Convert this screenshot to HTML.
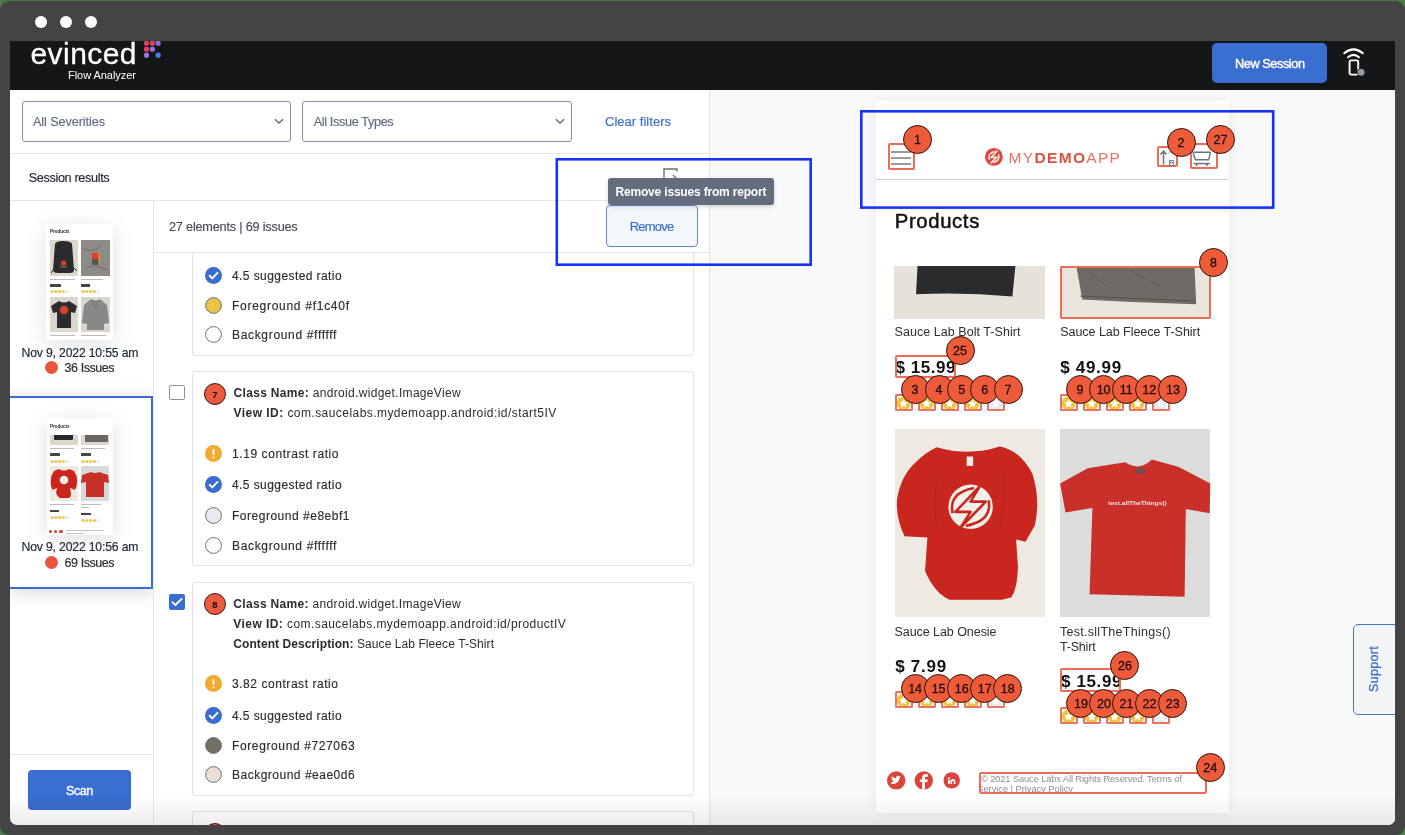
<!DOCTYPE html>
<html><head><meta charset="utf-8">
<style>
*{box-sizing:border-box;margin:0;padding:0}
html,body{width:1405px;height:835px;overflow:hidden;background:#4a7a48;font-family:"Liberation Sans",sans-serif}
.a{position:absolute}
#frame{position:absolute;left:0;top:1px;width:1405px;height:834px;background:#444444;border-radius:9px}
.tl{position:absolute;width:12.2px;height:12.2px;border-radius:50%;background:#fff;top:14.8px}
#content{position:absolute;left:10px;top:41px;width:1385px;height:784px;background:#fff;border-radius:0 0 7px 7px;overflow:hidden}
#pg{position:absolute;left:-10px;top:-41px;width:1405px;height:835px;will-change:transform}
.hl{position:absolute;height:1px;background:#e2e5e9}
.vl{position:absolute;width:1px;background:#e2e5e9}
.t{position:absolute;white-space:nowrap;line-height:1}
.sel{position:absolute;border:1.3px solid #8790a3;border-radius:3px;background:#fff}
.thumb{position:absolute;background:#fff;box-shadow:0 4px 20px rgba(0,0,0,0.13);overflow:hidden}
.card{position:absolute;background:#fff;border:1px solid #dfe2e6;border-radius:3px}
.ic{position:absolute;width:17px;height:17px;border-radius:50%}
.bd{position:absolute;border-radius:50%;background:#ec5b3f;border:1px solid #2a1510;color:#1e0a05;text-align:center;font-size:10px;font-weight:bold}
.nb{position:absolute;width:29px;height:29px;border-radius:50%;background:#ee5b3b;border:1px solid #2b120b;color:#220c06;text-align:center;font-size:12.5px;line-height:29px;-webkit-text-stroke:0.3px #220c06}
.box{position:absolute;border:2px solid #eb6d58;border-radius:2px}
.star{position:absolute;width:18px;height:17px;border:2px solid #ec7360;border-radius:1.5px;overflow:hidden;background:#fff}
</style></head><body>
<div id="frame">
  <div class="tl" style="left:35px"></div>
  <div class="tl" style="left:60px"></div>
  <div class="tl" style="left:85px"></div>
</div>
<div id="content"><div id="pg">
<div class="a" style="left:0px;top:41px;width:1405px;height:49px;background:#151617"></div>
<div class="t" style="left:30.5px;top:39px;font-size:30px;color:#fff;font-weight:400;letter-spacing:0.432px;-webkit-text-stroke:0.3px #fff;">evinced</div>
<svg class="a" style="left:141px;top:41px" width="22" height="18" viewBox="0 0 22 18">
    <circle cx="5.5" cy="2.2" r="2.6" fill="#e0405a"/><circle cx="11.4" cy="2.2" r="2.6" fill="#d84a6a"/><circle cx="17.1" cy="2.2" r="2.6" fill="#9a6ad8"/>
    <circle cx="5.5" cy="8.2" r="2.6" fill="#e0405a"/><circle cx="11.4" cy="8.2" r="2.6" fill="#9a70d8"/>
    <circle cx="5.5" cy="14.2" r="2.6" fill="#9a78e0"/><circle cx="17.1" cy="14.2" r="2.6" fill="#4a7ee8"/>
  </svg>
<div class="t" style="left:68px;top:70px;font-size:11px;color:#fff;font-weight:400;letter-spacing:-0.040px;">Flow Analyzer</div>
<div class="a" style="left:1212px;top:43px;width:115px;height:40px;background:#3a6dd0;border-radius:5px"></div>
<div class="t" style="left:1235px;top:58px;font-size:12.7px;color:#fff;font-weight:400;letter-spacing:-0.405px;-webkit-text-stroke:0.4px #fff;">New Session</div>
<svg class="a" style="left:1340px;top:46px" width="30" height="32" viewBox="0 0 30 32">
    <path d="M4.2 7.2 Q13.5 -0.5 22.8 7.2" stroke="#fff" stroke-width="2" fill="none" stroke-linecap="round"/>
    <path d="M8 11.2 Q13.5 6.6 19 11.2" stroke="#fff" stroke-width="2" fill="none" stroke-linecap="round"/>
    <rect x="9.6" y="14.4" width="8.6" height="14.2" rx="1.5" stroke="#fff" stroke-width="1.9" fill="none"/>
    <circle cx="21.1" cy="26.2" r="4.3" fill="#151617"/>
    <circle cx="21.1" cy="26.2" r="3.5" fill="#8a9aa8"/>
  </svg>
<div class="a" style="left:709px;top:90px;width:696px;height:745px;background:#f8f9fb"></div>
<div class="vl" style="left:709px;top:90px;height:745px"></div>
<div class="sel" style="left:22px;top:101px;width:269px;height:41px"></div>
<div class="t" style="left:33px;top:116px;font-size:12.7px;color:#5f6a80;font-weight:400;letter-spacing:-0.103px;-webkit-text-stroke:0.15px #5f6a80;">All Severities</div>
<svg class="a" style="left:274px;top:118px" width="10" height="7" viewBox="0 0 10 7"><path d="M1 1.2 L5 5 L9 1.2" stroke="#5f6a80" stroke-width="1.4" fill="none"/></svg>
<div class="sel" style="left:302px;top:101px;width:270px;height:41px"></div>
<div class="t" style="left:313.7px;top:116px;font-size:12.7px;color:#5f6a80;font-weight:400;letter-spacing:-0.365px;-webkit-text-stroke:0.15px #5f6a80;">All Issue Types</div>
<svg class="a" style="left:555px;top:118px" width="10" height="7" viewBox="0 0 10 7"><path d="M1 1.2 L5 5 L9 1.2" stroke="#5f6a80" stroke-width="1.4" fill="none"/></svg>
<div class="t" style="left:605px;top:115px;font-size:13px;color:#3a6dd0;font-weight:400;letter-spacing:0.021px;-webkit-text-stroke:0.15px #3a6dd0;">Clear filters</div>
<div class="hl" style="left:0;top:153px;width:709px"></div>
<div class="t" style="left:28.7px;top:172px;font-size:12.7px;color:#1e2330;font-weight:400;letter-spacing:-0.359px;-webkit-text-stroke:0.15px #1e2330;">Session results</div>
<div class="hl" style="left:0;top:200px;width:709px"></div>
<div class="vl" style="left:153px;top:200px;height:635px"></div>
<div class="t" style="left:169px;top:221px;font-size:12.7px;color:#454b57;font-weight:400;letter-spacing:-0.199px;-webkit-text-stroke:0.15px #454b57;">27 elements | 69 issues</div>
<div class="hl" style="left:153px;top:252px;width:556px"></div>
<div class="a" style="left:10px;top:201px;width:143px;height:553px;overflow:hidden"><div class="a" style="left:-10px;top:-201px;width:1405px;height:835px">
<div class="thumb" style="left:46px;top:224px;width:67px;height:116px">
    <div class="t" style="left:4px;top:6px;font-size:4.5px;color:#222;font-weight:bold">Products</div>
    <div class="a" style="left:4px;top:16px;width:28px;height:36px;background:#ddd6cb"></div>
    <svg class="a" style="left:4px;top:16px" width="28" height="36" viewBox="0 0 28 36"><path d="M5 4 Q6 1 13 1 Q21 1 22 4 L24 30 Q24 33 20 33 L8 33 Q3 33 3 30 Z" fill="#2b2b2d"/><path d="M3 30 L1 33 M24 28 L27 31" stroke="#333" stroke-width="1"/><circle cx="13.5" cy="23" r="2.6" fill="#d8412a"/><rect x="10" y="26" width="7" height="2" fill="#555"/></svg>
    <div class="a" style="left:35px;top:16px;width:29px;height:36px;background:#8e8a86"></div>
    <svg class="a" style="left:35px;top:16px" width="29" height="36" viewBox="0 0 29 36"><path d="M2 8 Q10 14 20 6 M4 28 Q14 24 26 30" stroke="#7a7672" stroke-width="1.2" fill="none"/><rect x="11" y="13" width="7" height="6" fill="#e0402a"/><rect x="11" y="19" width="7" height="6" fill="#555"/><rect x="17.5" y="12" width="1.2" height="13" fill="#d9a040"/></svg>
    <div class="a" style="left:4px;top:55px;width:25px;height:1px;background:#bbb"></div>
    <div class="a" style="left:35px;top:55px;width:22px;height:1px;background:#bbb"></div>
    <div class="a" style="left:4px;top:60px;width:11px;height:2.5px;background:#444"></div>
    <div class="a" style="left:35px;top:60px;width:9px;height:2.5px;background:#444"></div>
    <svg class="a" style="left:4px;top:65px" width="60" height="5" viewBox="0 0 60 5"><g fill="#f0c450"><circle cx="2" cy="2.5" r="1.6"/><circle cx="5.8" cy="2.5" r="1.6"/><circle cx="9.6" cy="2.5" r="1.6"/><circle cx="13.4" cy="2.5" r="1.6"/><circle cx="33" cy="2.5" r="1.6"/><circle cx="36.8" cy="2.5" r="1.6"/><circle cx="40.6" cy="2.5" r="1.6"/><circle cx="44.4" cy="2.5" r="1.6"/></g><g fill="#e4e8ef"><circle cx="17.2" cy="2.5" r="1.6"/><circle cx="48.2" cy="2.5" r="1.6"/></g></svg>
    <div class="a" style="left:4px;top:73px;width:28px;height:35px;background:#dcd6cc"></div>
    <svg class="a" style="left:4px;top:73px" width="28" height="35" viewBox="0 0 28 35"><path d="M9 4 Q14 7 19 4 L27 9 L25 16 L21 15 L21 31 L7 31 L7 15 L3 16 L1 9 Z" fill="#2c2c2e"/><circle cx="14" cy="13" r="4.2" fill="#d8412a"/></svg>
    <div class="a" style="left:35px;top:73px;width:29px;height:35px;background:#d9d4ce"></div>
    <svg class="a" style="left:35px;top:73px" width="29" height="35" viewBox="0 0 29 35"><path d="M10 2 Q14.5 5 19 2 L26 8 L28 26 L23 27 L23 33 L6 33 L6 27 L1 26 L3 8 Z" fill="#8a8886"/><path d="M12 3 L14.5 12 L17 3" stroke="#777" stroke-width="1" fill="none"/></svg>
    <div class="a" style="left:4px;top:111px;width:25px;height:1px;background:#bbb"></div>
    <div class="a" style="left:35px;top:111px;width:25px;height:1px;background:#bbb"></div>
  </div>
<div class="t" style="left:21.5px;top:347px;font-size:12.2px;color:#232a3d;font-weight:400;letter-spacing:-0.155px;-webkit-text-stroke:0.18px #232a3d;">Nov 9, 2022 10:55 am</div>
<div class="a" style="left:45px;top:361px;width:13px;height:13px;border-radius:50%;background:#e9573a"></div>
<div class="t" style="left:64.6px;top:362px;font-size:12.5px;color:#2a2d33;font-weight:400;letter-spacing:-0.439px;-webkit-text-stroke:0.18px #2a2d33;">36 Issues</div>
<div class="a" style="left:10px;top:396px;width:143px;height:193px;border:2px solid #3a6dd0;border-left:none;box-shadow:0 3px 18px rgba(0,0,0,0.16);background:#fff"></div>
<div class="thumb" style="left:47px;top:418px;width:66px;height:117px">
    <div class="t" style="left:3px;top:6.5px;font-size:4.5px;color:#222;font-weight:bold">Products</div>
    <div class="a" style="left:3px;top:17px;width:28px;height:10px;background:#ddd6cc"></div>
    <div class="a" style="left:7px;top:17px;width:19px;height:5px;background:#25272a;border-radius:0 0 1px 1px"></div>
    <div class="a" style="left:34px;top:17px;width:28px;height:10px;background:#ddd6cc"></div>
    <div class="a" style="left:37.5px;top:17px;width:23px;height:6.5px;background:#6a6763"></div>
    <div class="a" style="left:3px;top:29.5px;width:24px;height:1px;background:#bbb"></div>
    <div class="a" style="left:34px;top:29.5px;width:24px;height:1px;background:#bbb"></div>
    <div class="a" style="left:3px;top:35px;width:10px;height:2.5px;background:#444"></div>
    <div class="a" style="left:34px;top:35px;width:10px;height:2.5px;background:#444"></div>
    <svg class="a" style="left:3px;top:41px" width="60" height="5" viewBox="0 0 60 5"><g fill="#f0c450"><circle cx="2" cy="2.5" r="1.6"/><circle cx="5.8" cy="2.5" r="1.6"/><circle cx="9.6" cy="2.5" r="1.6"/><circle cx="13.4" cy="2.5" r="1.6"/><circle cx="33" cy="2.5" r="1.6"/><circle cx="36.8" cy="2.5" r="1.6"/><circle cx="40.6" cy="2.5" r="1.6"/><circle cx="44.4" cy="2.5" r="1.6"/></g><g fill="#e4e8ef"><circle cx="17.2" cy="2.5" r="1.6"/><circle cx="48.2" cy="2.5" r="1.6"/></g></svg>
    <div class="a" style="left:3px;top:48px;width:28px;height:35px;background:#eee9e1"></div>
    <svg class="a" style="left:3px;top:48px" width="28" height="35" viewBox="0 0 28 35"><path d="M9 3 Q14 6 19 3 L24 5 Q27 9 27.3 15 Q27 20 25 24 L20 22 L21 28 Q21 31 19 32 L10 32 Q7 30 6 27 L7 22 L2.5 24 Q0.5 20 0.7 15 Q1 9 4 5 Z" fill="#c9261e"/><circle cx="14" cy="14" r="4.3" fill="#f5eeea"/></svg>
    <div class="a" style="left:34px;top:48px;width:28px;height:35px;background:#d9d9d9"></div>
    <svg class="a" style="left:34px;top:48px" width="28" height="35" viewBox="0 0 28 35"><path d="M10 6 Q14 8 18 6 L27 9 L28 17 L23 16 L23 31 L5 31 L5 16 L0 17 L1 9 Z" fill="#c8302a"/></svg>
    <div class="a" style="left:3px;top:86px;width:24px;height:1px;background:#bbb"></div>
    <div class="a" style="left:34px;top:86px;width:20px;height:1px;background:#bbb"></div>
    <div class="a" style="left:34px;top:89px;width:8px;height:1px;background:#bbb"></div>
    <div class="a" style="left:3px;top:91.5px;width:9px;height:2.5px;background:#444"></div>
    <div class="a" style="left:34px;top:94.5px;width:10px;height:2.5px;background:#444"></div>
    <svg class="a" style="left:3px;top:96.5px" width="30" height="5" viewBox="0 0 30 5"><g fill="#f0c450"><circle cx="2" cy="2.5" r="1.6"/><circle cx="5.8" cy="2.5" r="1.6"/><circle cx="9.6" cy="2.5" r="1.6"/><circle cx="13.4" cy="2.5" r="1.6"/></g><circle cx="17.2" cy="2.5" r="1.6" fill="#e4e8ef"/></svg>
    <svg class="a" style="left:34px;top:99.5px" width="30" height="5" viewBox="0 0 30 5"><g fill="#f0c450"><circle cx="2" cy="2.5" r="1.6"/><circle cx="5.8" cy="2.5" r="1.6"/><circle cx="9.6" cy="2.5" r="1.6"/><circle cx="13.4" cy="2.5" r="1.6"/></g><circle cx="17.2" cy="2.5" r="1.6" fill="#e4e8ef"/></svg>
    <div class="a" style="left:1.8px;top:111.8px;width:3.4px;height:3.4px;background:#d8412a;border-radius:50%"></div>
    <div class="a" style="left:7px;top:111.8px;width:3.4px;height:3.4px;background:#d8412a;border-radius:50%"></div>
    <div class="a" style="left:12.3px;top:111.8px;width:3.4px;height:3.4px;background:#d8412a;border-radius:50%"></div>
    <div class="a" style="left:19px;top:112.3px;width:38px;height:0.8px;background:#c4c4c4"></div>
    <div class="a" style="left:19px;top:114.5px;width:18px;height:0.8px;background:#c4c4c4"></div>
  </div>
<div class="t" style="left:21.5px;top:541px;font-size:12.2px;color:#232a3d;font-weight:400;letter-spacing:-0.155px;-webkit-text-stroke:0.18px #232a3d;">Nov 9, 2022 10:56 am</div>
<div class="a" style="left:45px;top:556px;width:13px;height:13px;border-radius:50%;background:#e9573a"></div>
<div class="t" style="left:64.6px;top:557px;font-size:12.5px;color:#2a2d33;font-weight:400;letter-spacing:-0.439px;-webkit-text-stroke:0.18px #2a2d33;">69 Issues</div>
</div></div>
<div class="hl" style="left:10px;top:754px;width:143px"></div>
<div class="a" style="left:28px;top:770px;width:103px;height:40px;background:#3a6dd0;border-radius:4px"></div>
<div class="t" style="left:66.1px;top:785px;font-size:12.5px;color:#fff;font-weight:400;letter-spacing:-0.500px;-webkit-text-stroke:0.4px #fff;">Scan</div>
<div class="a" style="left:154px;top:253px;width:555px;height:582px;overflow:hidden"><div class="a" style="left:-154px;top:-253px;width:1405px;height:835px">
<div class="card" style="left:192px;top:150px;width:502px;height:206px"></div>
<svg class="a" style="left:205.4px;top:266.5px" width="17" height="17" viewBox="0 0 17 17"><circle cx="8.5" cy="8.5" r="8.5" fill="#3a6dd0"/><path d="M4.6 8.8 L7.3 11.4 L12.5 5.9" stroke="#fff" stroke-width="1.9" fill="none" stroke-linecap="round" stroke-linejoin="round"/></svg>
<div class="t" style="left:232px;top:270px;font-size:12px;color:#2a2c31;font-weight:400;letter-spacing:0.418px;-webkit-text-stroke:0.15px #2a2c31;">4.5 suggested ratio</div>
<svg class="a" style="left:205.4px;top:296.5px" width="17" height="17" viewBox="0 0 17 17"><circle cx="8.5" cy="8.5" r="7.9" fill="#ebc447" stroke="#6d6f73" stroke-width="1"/></svg>
<div class="t" style="left:232px;top:300px;font-size:12px;color:#2a2c31;font-weight:400;letter-spacing:0.721px;-webkit-text-stroke:0.15px #2a2c31;">Foreground #f1c40f</div>
<svg class="a" style="left:205.4px;top:326.0px" width="17" height="17" viewBox="0 0 17 17"><circle cx="8.5" cy="8.5" r="7.9" fill="#ffffff" stroke="#6d6f73" stroke-width="1"/></svg>
<div class="t" style="left:232px;top:329px;font-size:12px;color:#2a2c31;font-weight:400;letter-spacing:0.672px;-webkit-text-stroke:0.15px #2a2c31;">Background #ffffff</div>
<div class="a" style="left:169px;top:385px;width:16px;height:15px;border:1.3px solid #8a93a4;border-radius:2px;background:#fff"></div>
<div class="card" style="left:192px;top:371px;width:502px;height:195px"></div>
<div class="a" style="left:204px;top:383px;width:22px;height:22px;border-radius:50%;background:#ec5b3f;border:1px solid #3a1a12"></div>
<div class="t" style="left:204px;width:22px;text-align:center;top:390px;font-size:9.5px;color:#1e0a05;font-weight:700;">7</div>
<div class="t" style="left:233.6px;top:387px;font-size:12px;color:#2a2c31;font-weight:400;letter-spacing:0.317px;"><b>Class Name:</b> android.widget.ImageView</div>
<div class="t" style="left:233.6px;top:407px;font-size:12px;color:#2a2c31;font-weight:400;letter-spacing:0.444px;"><b>View ID:</b> com.saucelabs.mydemoapp.android:id/start5IV</div>
<svg class="a" style="left:205.4px;top:444.8px" width="17" height="17" viewBox="0 0 17 17"><circle cx="8.5" cy="8.5" r="8.5" fill="#f1a92f"/><rect x="7.6" y="3.8" width="1.8" height="6" rx="0.9" fill="#fff"/><circle cx="8.5" cy="12.4" r="1" fill="#fff"/></svg>
<div class="t" style="left:232px;top:448px;font-size:12px;color:#2a2c31;font-weight:400;letter-spacing:0.580px;-webkit-text-stroke:0.15px #2a2c31;">1.19 contrast ratio</div>
<svg class="a" style="left:205.4px;top:476.3px" width="17" height="17" viewBox="0 0 17 17"><circle cx="8.5" cy="8.5" r="8.5" fill="#3a6dd0"/><path d="M4.6 8.8 L7.3 11.4 L12.5 5.9" stroke="#fff" stroke-width="1.9" fill="none" stroke-linecap="round" stroke-linejoin="round"/></svg>
<div class="t" style="left:232px;top:479px;font-size:12px;color:#2a2c31;font-weight:400;letter-spacing:0.418px;-webkit-text-stroke:0.15px #2a2c31;">4.5 suggested ratio</div>
<svg class="a" style="left:205.4px;top:507.0px" width="17" height="17" viewBox="0 0 17 17"><circle cx="8.5" cy="8.5" r="7.9" fill="#e8ebf1" stroke="#6d6f73" stroke-width="1"/></svg>
<div class="t" style="left:232px;top:510px;font-size:12px;color:#2a2c31;font-weight:400;letter-spacing:0.515px;-webkit-text-stroke:0.15px #2a2c31;">Foreground #e8ebf1</div>
<svg class="a" style="left:205.4px;top:536.5px" width="17" height="17" viewBox="0 0 17 17"><circle cx="8.5" cy="8.5" r="7.9" fill="#ffffff" stroke="#6d6f73" stroke-width="1"/></svg>
<div class="t" style="left:232px;top:540px;font-size:12px;color:#2a2c31;font-weight:400;letter-spacing:0.666px;-webkit-text-stroke:0.15px #2a2c31;">Background #ffffff</div>
<svg class="a" style="left:169px;top:594px" width="16" height="16" viewBox="0 0 16 16"><rect x="0" y="0" width="16" height="16" rx="2" fill="#3a6dd0"/><path d="M3.4 8.2 L6.4 11 L12.6 4.8" stroke="#fff" stroke-width="1.8" fill="none" stroke-linecap="round" stroke-linejoin="round"/></svg>
<div class="card" style="left:192px;top:581.5px;width:502px;height:214px"></div>
<div class="a" style="left:204px;top:593px;width:22px;height:22px;border-radius:50%;background:#ec5b3f;border:1px solid #3a1a12"></div>
<div class="t" style="left:204px;width:22px;text-align:center;top:600px;font-size:9.5px;color:#1e0a05;font-weight:700;">8</div>
<div class="t" style="left:233.3px;top:598px;font-size:12px;color:#2a2c31;font-weight:400;letter-spacing:0.325px;"><b>Class Name:</b> android.widget.ImageView</div>
<div class="t" style="left:233.3px;top:618px;font-size:12px;color:#2a2c31;font-weight:400;letter-spacing:0.432px;"><b>View ID:</b> com.saucelabs.mydemoapp.android:id/productIV</div>
<div class="t" style="left:233.3px;top:638px;font-size:12px;color:#2a2c31;font-weight:400;letter-spacing:0.079px;"><b>Content Description:</b> Sauce Lab Fleece T-Shirt</div>
<svg class="a" style="left:205.4px;top:675.1px" width="17" height="17" viewBox="0 0 17 17"><circle cx="8.5" cy="8.5" r="8.5" fill="#f1a92f"/><rect x="7.6" y="3.8" width="1.8" height="6" rx="0.9" fill="#fff"/><circle cx="8.5" cy="12.4" r="1" fill="#fff"/></svg>
<div class="t" style="left:232px;top:678px;font-size:12px;color:#2a2c31;font-weight:400;letter-spacing:0.552px;-webkit-text-stroke:0.15px #2a2c31;">3.82 contrast ratio</div>
<svg class="a" style="left:205.4px;top:706.5px" width="17" height="17" viewBox="0 0 17 17"><circle cx="8.5" cy="8.5" r="8.5" fill="#3a6dd0"/><path d="M4.6 8.8 L7.3 11.4 L12.5 5.9" stroke="#fff" stroke-width="1.9" fill="none" stroke-linecap="round" stroke-linejoin="round"/></svg>
<div class="t" style="left:232px;top:710px;font-size:12px;color:#2a2c31;font-weight:400;letter-spacing:0.418px;-webkit-text-stroke:0.15px #2a2c31;">4.5 suggested ratio</div>
<svg class="a" style="left:205.4px;top:736.7px" width="17" height="17" viewBox="0 0 17 17"><circle cx="8.5" cy="8.5" r="7.9" fill="#727063" stroke="#6d6f73" stroke-width="1"/></svg>
<div class="t" style="left:232px;top:740px;font-size:12px;color:#2a2c31;font-weight:400;letter-spacing:0.618px;-webkit-text-stroke:0.15px #2a2c31;">Foreground #727063</div>
<svg class="a" style="left:205.4px;top:766.3px" width="17" height="17" viewBox="0 0 17 17"><circle cx="8.5" cy="8.5" r="7.9" fill="#eae0d6" stroke="#6d6f73" stroke-width="1"/></svg>
<div class="t" style="left:232px;top:769px;font-size:12px;color:#2a2c31;font-weight:400;letter-spacing:0.500px;-webkit-text-stroke:0.15px #2a2c31;">Background #eae0d6</div>
<div class="card" style="left:192px;top:811px;width:502px;height:200px"></div>
<div class="a" style="left:204px;top:823px;width:22px;height:22px;border-radius:50%;background:#ec5b3f;border:1px solid #3a1a12"></div>
<div class="t" style="left:204px;width:22px;text-align:center;top:830px;font-size:9.5px;color:#1e0a05;font-weight:700;">9</div>
</div></div>
<div class="a" style="left:606px;top:205px;width:92px;height:42px;background:#f3f6fb;border:1px solid #5f88d6;border-radius:4px"></div>
<div class="t" style="left:629.7px;top:220px;font-size:13px;color:#3a6dd0;font-weight:400;letter-spacing:-0.764px;-webkit-text-stroke:0.15px #3a6dd0;">Remove</div>
<svg class="a" style="left:662px;top:167px" width="18" height="12" viewBox="0 0 18 12"><path d="M2 11 V2 H15 V4.5" stroke="#66717f" stroke-width="1.4" fill="none"/><path d="M11 8 L14 11" stroke="#66717f" stroke-width="1.4"/></svg>
<div class="a" style="left:608px;top:178px;width:166px;height:27px;background:#636d7d;border-radius:3px;box-shadow:0 2px 4px rgba(0,0,0,0.15)"></div>
<div class="t" style="left:615.5px;top:186px;font-size:12px;color:#fff;font-weight:700;letter-spacing:-0.183px;">Remove issues from report</div>
<svg class="a" style="left:553px;top:156px" width="262" height="112"><rect x="3.8" y="3.3" width="253.9" height="105.4" fill="none" stroke="#1632f2" stroke-width="2.6"/></svg>
<div class="a" style="left:876px;top:100.5px;width:353px;height:712px;background:#fff;box-shadow:0 0 12px rgba(0,0,0,0.07)"></div>
<div class="a" style="left:876px;top:178.5px;width:353px;height:1.2px;background:#d0d0d0"></div>
<div class="box" style="left:887.5px;top:143px;width:27px;height:27.3px"></div>
<div class="a" style="left:891px;top:151px;width:20px;height:2.2px;background:#9b9b9b"></div>
<div class="a" style="left:891px;top:156.6px;width:20px;height:2.2px;background:#9b9b9b"></div>
<div class="a" style="left:891px;top:162.5px;width:20px;height:2.2px;background:#9b9b9b"></div>
<div class="box" style="left:1156.6px;top:145.7px;width:21px;height:21.6px"></div>
<svg class="a" style="left:1158px;top:148px" width="19" height="19" viewBox="0 0 19 19"><path d="M5.5 16.5 V3.5 M2.5 6.5 L5.5 3.2 L8.5 6.5" stroke="#6b7280" stroke-width="1.5" fill="none"/><path d="M10.5 5.5 L12.3 3.3 L14 5.5" stroke="#8a909a" stroke-width="0.9" fill="none"/><text x="10.6" y="17.6" font-size="8.6" font-family="Liberation Sans" font-weight="bold" fill="#7a808a">B</text></svg>
<div class="box" style="left:1189.5px;top:143px;width:28px;height:26.4px"></div>
<svg class="a" style="left:1190px;top:148px" width="26" height="20" viewBox="0 0 26 20"><path d="M3 4.3 H20.5 L18.6 11.8 H5.3 Z" stroke="#6b7280" stroke-width="1.4" fill="none"/><path d="M3.6 15.6 H20" stroke="#6b7280" stroke-width="1.5"/><path d="M6.8 15.6 V18 M16.8 15.6 V18" stroke="#6b7280" stroke-width="1.6"/></svg>
<svg class="a" style="left:984.8px;top:148px" width="18" height="18" viewBox="0 0 18 18"><circle cx="8.9" cy="8.9" r="8.9" fill="#d9483a"/><path d="M12.3 2.6 L6.2 9.4 H11.6 L5.6 15.4" fill="none" stroke="#fbe9e6" stroke-width="1.6"/><path d="M4.3 11.6 Q2.6 5.2 9.6 3.4 M13.6 6.3 Q15.4 12.6 8.4 14.5" fill="none" stroke="#fbe9e6" stroke-width="1.5"/></svg>
<div class="t" style="left:1008.6px;top:150px;font-size:15.5px;color:#d65440;font-weight:400;letter-spacing:1.317px;"><span style="color:#e27362">MY</span><b style="font-weight:700">DEMO</b><span style="color:#e27362">APP</span></div>
<div class="t" style="left:894.8px;top:211px;font-size:20.3px;color:#111;font-weight:400;letter-spacing:0.636px;-webkit-text-stroke:0.5px #111;">Products</div>
<div class="a" style="left:894.2px;top:265.6px;width:151px;height:53px;background:#e7e2d9"></div>
<svg class="a" style="left:894.2px;top:265.6px" width="151" height="53" viewBox="0 0 151 53"><path d="M23.5 0 H121.4 L118.4 30.5 Q70 26 22 28.2 Z" fill="#2a2b2d"/></svg>
<div class="a" style="left:1060.3px;top:266px;width:150px;height:52.5px;background:#e9e4dc"></div>
<svg class="a" style="left:1060.3px;top:266px" width="150" height="53" viewBox="0 0 150 53"><path d="M16.4 0.5 H134.5 L136.2 38.3 Q80 37 22.3 33.6 Z" fill="#6e6b66"/><path d="M20 30 Q80 33 135 35" stroke="#4e4b47" stroke-width="0.8" fill="none"/><path d="M30 8 L50 22 M70 5 L100 20" stroke="#5a5752" stroke-width="0.8" fill="none"/></svg>
<div class="box" style="left:1059.5px;top:265.5px;width:151px;height:53.5px;border-width:2px"></div>
<div class="t" style="left:894.5px;top:326px;font-size:12.5px;color:#2e2e2e;font-weight:400;font-family:Liberation Sans;letter-spacing:0.055px;">Sauce Lab Bolt T-Shirt</div>
<div class="t" style="left:1060.2px;top:326px;font-size:12.5px;color:#2e2e2e;font-weight:400;letter-spacing:-0.036px;">Sauce Lab Fleece T-Shirt</div>
<div class="t" style="left:895.5px;top:359px;font-size:17px;color:#111;font-weight:700;letter-spacing:0.544px;">$ 15.99</div>
<div class="t" style="left:1060.2px;top:359px;font-size:17px;color:#111;font-weight:700;letter-spacing:0.711px;">$ 49.99</div>
<div class="box" style="left:895px;top:354.6px;width:61.4px;height:23.7px"></div>
<div class="star" style="left:895.0px;top:393.5px"><svg class="a" style="left:-3px;top:-2px" width="20" height="20" viewBox="0 0 20 20"><circle cx="9.6" cy="9.4" r="6.9" fill="#ecc444"/><path d="M9.6 5.2 L10.9 8.1 L14 8.4 L11.7 10.4 L12.4 13.5 L9.6 11.9 L6.8 13.5 L7.5 10.4 L5.2 8.4 L8.3 8.1 Z" fill="#fff"/></svg></div>
<div class="star" style="left:918.0px;top:393.5px"><svg class="a" style="left:-3px;top:-2px" width="20" height="20" viewBox="0 0 20 20"><circle cx="9.6" cy="9.4" r="6.9" fill="#ecc444"/><path d="M9.6 5.2 L10.9 8.1 L14 8.4 L11.7 10.4 L12.4 13.5 L9.6 11.9 L6.8 13.5 L7.5 10.4 L5.2 8.4 L8.3 8.1 Z" fill="#fff"/></svg></div>
<div class="star" style="left:941.0px;top:393.5px"><svg class="a" style="left:-3px;top:-2px" width="20" height="20" viewBox="0 0 20 20"><circle cx="9.6" cy="9.4" r="6.9" fill="#ecc444"/><path d="M9.6 5.2 L10.9 8.1 L14 8.4 L11.7 10.4 L12.4 13.5 L9.6 11.9 L6.8 13.5 L7.5 10.4 L5.2 8.4 L8.3 8.1 Z" fill="#fff"/></svg></div>
<div class="star" style="left:964.0px;top:393.5px"><svg class="a" style="left:-3px;top:-2px" width="20" height="20" viewBox="0 0 20 20"><circle cx="9.6" cy="9.4" r="6.9" fill="#ecc444"/><path d="M9.6 5.2 L10.9 8.1 L14 8.4 L11.7 10.4 L12.4 13.5 L9.6 11.9 L6.8 13.5 L7.5 10.4 L5.2 8.4 L8.3 8.1 Z" fill="#fff"/></svg></div>
<div class="star" style="left:987.0px;top:393.5px"><svg class="a" style="left:-3px;top:-2px" width="20" height="20" viewBox="0 0 20 20"><circle cx="9.6" cy="9.4" r="6.9" fill="#e4eaf3"/><path d="M9.6 5.2 L10.9 8.1 L14 8.4 L11.7 10.4 L12.4 13.5 L9.6 11.9 L6.8 13.5 L7.5 10.4 L5.2 8.4 L8.3 8.1 Z" fill="#fff"/></svg></div>
<div class="star" style="left:1060.3px;top:393.5px"><svg class="a" style="left:-3px;top:-2px" width="20" height="20" viewBox="0 0 20 20"><circle cx="9.6" cy="9.4" r="6.9" fill="#ecc444"/><path d="M9.6 5.2 L10.9 8.1 L14 8.4 L11.7 10.4 L12.4 13.5 L9.6 11.9 L6.8 13.5 L7.5 10.4 L5.2 8.4 L8.3 8.1 Z" fill="#fff"/></svg></div>
<div class="star" style="left:1083.3px;top:393.5px"><svg class="a" style="left:-3px;top:-2px" width="20" height="20" viewBox="0 0 20 20"><circle cx="9.6" cy="9.4" r="6.9" fill="#ecc444"/><path d="M9.6 5.2 L10.9 8.1 L14 8.4 L11.7 10.4 L12.4 13.5 L9.6 11.9 L6.8 13.5 L7.5 10.4 L5.2 8.4 L8.3 8.1 Z" fill="#fff"/></svg></div>
<div class="star" style="left:1106.3px;top:393.5px"><svg class="a" style="left:-3px;top:-2px" width="20" height="20" viewBox="0 0 20 20"><circle cx="9.6" cy="9.4" r="6.9" fill="#ecc444"/><path d="M9.6 5.2 L10.9 8.1 L14 8.4 L11.7 10.4 L12.4 13.5 L9.6 11.9 L6.8 13.5 L7.5 10.4 L5.2 8.4 L8.3 8.1 Z" fill="#fff"/></svg></div>
<div class="star" style="left:1129.3px;top:393.5px"><svg class="a" style="left:-3px;top:-2px" width="20" height="20" viewBox="0 0 20 20"><circle cx="9.6" cy="9.4" r="6.9" fill="#ecc444"/><path d="M9.6 5.2 L10.9 8.1 L14 8.4 L11.7 10.4 L12.4 13.5 L9.6 11.9 L6.8 13.5 L7.5 10.4 L5.2 8.4 L8.3 8.1 Z" fill="#fff"/></svg></div>
<div class="star" style="left:1152.3px;top:393.5px"><svg class="a" style="left:-3px;top:-2px" width="20" height="20" viewBox="0 0 20 20"><circle cx="9.6" cy="9.4" r="6.9" fill="#e4eaf3"/><path d="M9.6 5.2 L10.9 8.1 L14 8.4 L11.7 10.4 L12.4 13.5 L9.6 11.9 L6.8 13.5 L7.5 10.4 L5.2 8.4 L8.3 8.1 Z" fill="#fff"/></svg></div>
<div class="a" style="left:894.5px;top:429.3px;width:150.6px;height:187.4px;background:#eeeae3"></div>
<svg class="a" style="left:890px;top:425px" width="160" height="195" viewBox="0 0 685 835">
<path d="M200,95 Q340,135 470,92 Q560,110 610,210 Q645,320 620,430 L580,500 L540,490 L548,610 Q545,700 520,738 L480,748 L255,748 Q190,720 150,625 L160,482 L62,476 Q25,400 30,320 Q45,220 110,160 Q150,118 200,95 Z" fill="#c8261e"/>
<path d="M200,440 Q180,300 210,200 M470,455 Q500,300 480,200" stroke="#b52019" stroke-width="5" fill="none" opacity="0.6"/>
<circle cx="345" cy="350" r="95" fill="#f3efe9"/>
<path d="M385,262 L280,372 L345,372 L300,442 L410,328 L345,328 Z" fill="none" stroke="#c8261e" stroke-width="11" stroke-linejoin="round"/>
<path d="M268,378 Q250,290 360,270 M422,322 Q440,410 325,432" fill="none" stroke="#c8261e" stroke-width="11"/>
<rect x="328" y="135" width="28" height="40" fill="#f0ece6"/>
</svg>
<div class="a" style="left:1060.1px;top:429.3px;width:150.3px;height:187.4px;background:#dcdcda"></div>
<svg class="a" style="left:1055px;top:425px" width="160" height="195" viewBox="0 0 685 835">
<path d="M300,160 Q360,200 415,148 L530,180 L665,250 L662,378 L560,360 L555,735 L148,725 L160,355 L45,375 L22,250 L140,185 Z" fill="#c9302a"/>
<rect x="350" y="185" width="32" height="22" fill="#5a5a5a"/>
<text x="228" y="342" font-size="25" font-weight="bold" font-family="Liberation Sans" fill="#f3e6e4" textLength="250" lengthAdjust="spacingAndGlyphs">test.allTheThings()</text>
</svg>
<div class="t" style="left:894.5px;top:626px;font-size:12.5px;color:#2e2e2e;font-weight:400;letter-spacing:-0.057px;">Sauce Lab Onesie</div>
<div class="t" style="left:1060px;top:626px;font-size:12.5px;color:#2e2e2e;font-weight:400;letter-spacing:0.278px;">Test.sllTheThings()</div>
<div class="t" style="left:1060px;top:641px;font-size:12.5px;color:#2e2e2e;font-weight:400;letter-spacing:-0.202px;">T-Shirt</div>
<div class="t" style="left:895.2px;top:658px;font-size:17px;color:#111;font-weight:700;letter-spacing:0.747px;">$ 7.99</div>
<div class="t" style="left:1061px;top:673px;font-size:17px;color:#111;font-weight:700;letter-spacing:0.628px;">$ 15.99</div>
<div class="box" style="left:1060.3px;top:668.3px;width:61.2px;height:23.7px"></div>
<div class="star" style="left:895.0px;top:691.3px"><svg class="a" style="left:-3px;top:-2px" width="20" height="20" viewBox="0 0 20 20"><circle cx="9.6" cy="9.4" r="6.9" fill="#ecc444"/><path d="M9.6 5.2 L10.9 8.1 L14 8.4 L11.7 10.4 L12.4 13.5 L9.6 11.9 L6.8 13.5 L7.5 10.4 L5.2 8.4 L8.3 8.1 Z" fill="#fff"/></svg></div>
<div class="star" style="left:918.0px;top:691.3px"><svg class="a" style="left:-3px;top:-2px" width="20" height="20" viewBox="0 0 20 20"><circle cx="9.6" cy="9.4" r="6.9" fill="#ecc444"/><path d="M9.6 5.2 L10.9 8.1 L14 8.4 L11.7 10.4 L12.4 13.5 L9.6 11.9 L6.8 13.5 L7.5 10.4 L5.2 8.4 L8.3 8.1 Z" fill="#fff"/></svg></div>
<div class="star" style="left:941.0px;top:691.3px"><svg class="a" style="left:-3px;top:-2px" width="20" height="20" viewBox="0 0 20 20"><circle cx="9.6" cy="9.4" r="6.9" fill="#ecc444"/><path d="M9.6 5.2 L10.9 8.1 L14 8.4 L11.7 10.4 L12.4 13.5 L9.6 11.9 L6.8 13.5 L7.5 10.4 L5.2 8.4 L8.3 8.1 Z" fill="#fff"/></svg></div>
<div class="star" style="left:964.0px;top:691.3px"><svg class="a" style="left:-3px;top:-2px" width="20" height="20" viewBox="0 0 20 20"><circle cx="9.6" cy="9.4" r="6.9" fill="#ecc444"/><path d="M9.6 5.2 L10.9 8.1 L14 8.4 L11.7 10.4 L12.4 13.5 L9.6 11.9 L6.8 13.5 L7.5 10.4 L5.2 8.4 L8.3 8.1 Z" fill="#fff"/></svg></div>
<div class="star" style="left:987.0px;top:691.3px"><svg class="a" style="left:-3px;top:-2px" width="20" height="20" viewBox="0 0 20 20"><circle cx="9.6" cy="9.4" r="6.9" fill="#e4eaf3"/><path d="M9.6 5.2 L10.9 8.1 L14 8.4 L11.7 10.4 L12.4 13.5 L9.6 11.9 L6.8 13.5 L7.5 10.4 L5.2 8.4 L8.3 8.1 Z" fill="#fff"/></svg></div>
<div class="star" style="left:1060.3px;top:707.3px"><svg class="a" style="left:-3px;top:-2px" width="20" height="20" viewBox="0 0 20 20"><circle cx="9.6" cy="9.4" r="6.9" fill="#ecc444"/><path d="M9.6 5.2 L10.9 8.1 L14 8.4 L11.7 10.4 L12.4 13.5 L9.6 11.9 L6.8 13.5 L7.5 10.4 L5.2 8.4 L8.3 8.1 Z" fill="#fff"/></svg></div>
<div class="star" style="left:1083.3px;top:707.3px"><svg class="a" style="left:-3px;top:-2px" width="20" height="20" viewBox="0 0 20 20"><circle cx="9.6" cy="9.4" r="6.9" fill="#ecc444"/><path d="M9.6 5.2 L10.9 8.1 L14 8.4 L11.7 10.4 L12.4 13.5 L9.6 11.9 L6.8 13.5 L7.5 10.4 L5.2 8.4 L8.3 8.1 Z" fill="#fff"/></svg></div>
<div class="star" style="left:1106.3px;top:707.3px"><svg class="a" style="left:-3px;top:-2px" width="20" height="20" viewBox="0 0 20 20"><circle cx="9.6" cy="9.4" r="6.9" fill="#ecc444"/><path d="M9.6 5.2 L10.9 8.1 L14 8.4 L11.7 10.4 L12.4 13.5 L9.6 11.9 L6.8 13.5 L7.5 10.4 L5.2 8.4 L8.3 8.1 Z" fill="#fff"/></svg></div>
<div class="star" style="left:1129.3px;top:707.3px"><svg class="a" style="left:-3px;top:-2px" width="20" height="20" viewBox="0 0 20 20"><circle cx="9.6" cy="9.4" r="6.9" fill="#ecc444"/><path d="M9.6 5.2 L10.9 8.1 L14 8.4 L11.7 10.4 L12.4 13.5 L9.6 11.9 L6.8 13.5 L7.5 10.4 L5.2 8.4 L8.3 8.1 Z" fill="#fff"/></svg></div>
<div class="star" style="left:1152.3px;top:707.3px"><svg class="a" style="left:-3px;top:-2px" width="20" height="20" viewBox="0 0 20 20"><circle cx="9.6" cy="9.4" r="6.9" fill="#e4eaf3"/><path d="M9.6 5.2 L10.9 8.1 L14 8.4 L11.7 10.4 L12.4 13.5 L9.6 11.9 L6.8 13.5 L7.5 10.4 L5.2 8.4 L8.3 8.1 Z" fill="#fff"/></svg></div>
<svg class="a" style="left:886px;top:770px" width="76" height="21" viewBox="0 0 76 21">
<circle cx="10.2" cy="10.4" r="9.2" fill="#d9453a"/>
<path d="M5 13.5 Q8 14.5 10.5 13 Q13.5 11 13.8 7.5 L15 6.3 L13.6 6.5 Q12.5 5.3 11 6 Q9.8 6.8 10.2 8.3 Q7.6 8.2 5.6 6.3 Q5 8.5 6.8 9.8 L6 9.6 Q6.3 11 7.7 11.6 Q6.5 12.4 5 12.3 Z" fill="#fff"/>
<circle cx="37.8" cy="10.4" r="9.2" fill="#d9453a"/>
<path d="M38.9 19.6 V12 H41.3 L41.7 9.4 H38.9 V7.8 Q38.9 6.7 40 6.7 H41.8 V4.3 Q40.8 4.1 39.6 4.1 Q36.2 4.1 36.2 7.6 V9.4 H33.8 V12 H36.2 V19.6 Z" fill="#fff"/>
<circle cx="65.7" cy="10.4" r="8.2" fill="#d9453a"/>
<circle cx="62.9" cy="8.2" r="1" fill="#fff"/><rect x="62.05" y="9.8" width="1.7" height="4.2" fill="#fff"/><path d="M65.3 14 V9.8 M65.3 11.6 Q65.8 9.9 67.3 9.9 Q68.6 9.9 68.6 11.6 V14" stroke="#fff" stroke-width="1.6" fill="none"/>
</svg>
<div class="a" style="left:979.3px;top:771.5px;width:228px;height:22.5px;overflow:hidden">
<div class="t" style="left:1.7px;top:3px;font-size:9.3px;color:#8d8d8d;font-weight:400;letter-spacing:-0.112px;">© 2021 Sauce Labs All Rights Reserved. Terms of</div>
<div class="t" style="left:-2px;top:13px;font-size:9.3px;color:#8d8d8d;font-weight:400;letter-spacing:-0.033px;">Service | Privacy Policy</div>
</div>
<div class="box" style="left:979.3px;top:771.5px;width:228px;height:22.5px"></div>
<div class="nb" style="left:903.0px;top:125.1px">1</div>
<div class="nb" style="left:1166.5px;top:127.9px">2</div>
<div class="nb" style="left:1206.0px;top:125.1px">27</div>
<div class="nb" style="left:900.5px;top:375.0px">3</div>
<div class="nb" style="left:924.5px;top:375.0px">4</div>
<div class="nb" style="left:947.2px;top:375.0px">5</div>
<div class="nb" style="left:970.2px;top:375.0px">6</div>
<div class="nb" style="left:993.5px;top:375.0px">7</div>
<div class="nb" style="left:1198.9px;top:248.0px">8</div>
<div class="nb" style="left:1065.5px;top:375.1px">9</div>
<div class="nb" style="left:1089.1px;top:375.1px">10</div>
<div class="nb" style="left:1111.8px;top:375.1px">11</div>
<div class="nb" style="left:1134.7px;top:375.1px">12</div>
<div class="nb" style="left:1158.4px;top:375.1px">13</div>
<div class="nb" style="left:900.6px;top:673.9px">14</div>
<div class="nb" style="left:924.1px;top:673.9px">15</div>
<div class="nb" style="left:947.3px;top:673.9px">16</div>
<div class="nb" style="left:970.3px;top:673.9px">17</div>
<div class="nb" style="left:993.3px;top:673.9px">18</div>
<div class="nb" style="left:1066.4px;top:689.1px">19</div>
<div class="nb" style="left:1089.4px;top:689.1px">20</div>
<div class="nb" style="left:1111.9px;top:689.1px">21</div>
<div class="nb" style="left:1134.9px;top:689.1px">22</div>
<div class="nb" style="left:1158.3px;top:689.1px">23</div>
<div class="nb" style="left:1195.7px;top:753.3px">24</div>
<div class="nb" style="left:945.5px;top:336.4px">25</div>
<div class="nb" style="left:1110.4px;top:650.5px">26</div>
<svg class="a" style="left:858px;top:108px" width="420" height="104"><rect x="3.3" y="3.3" width="411.9" height="96.3" fill="none" stroke="#1632f2" stroke-width="2.6"/></svg>
<div class="a" style="left:1353px;top:623.5px;width:50px;height:91.5px;background:#f4f5f7;border:1px solid #4a74d0;border-radius:5px 0 0 5px"></div>
<div class="t" style="left:1374px;top:669px;font-size:12.5px;color:#3a6dd0;-webkit-text-stroke:0.3px #3a6dd0;transform:translate(-50%,-50%) rotate(-90deg);letter-spacing:0.3px">Support</div>
<div class="a" style="left:10px;top:795px;width:1385px;height:30px;background:linear-gradient(to bottom,rgba(0,0,0,0),rgba(0,0,0,0.07))"></div>
</div></div>
</body></html>
